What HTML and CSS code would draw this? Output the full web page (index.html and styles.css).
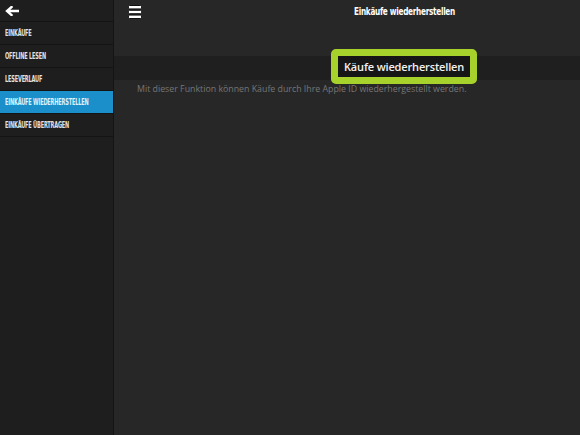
FILE: index.html
```html
<!DOCTYPE html>
<html lang="de">

<head>
  <meta charset="UTF-8">
  <meta name="viewport" content="width=device-width, initial-scale=1.0">

  <title>Einkäufe wiederherstellen</title>
  <link rel="stylesheet" href="styles.css">
</head>

<body>
  <aside class="sidebar">
    <div class="back-row">
      <svg class="back-icon" width="14" height="10" viewBox="0 0 14 10">
        <path d="M13 5H3M6.5 1L2 5l4.5 4" fill="none" stroke="#fff" stroke-width="2.4" stroke-linecap="square"/>
      </svg>
    </div>
    <ul class="menu">
      <li class="menu-item"><span class="narrow">Einkäufe</span></li>
      <li class="menu-item"><span class="narrow">Offline lesen</span></li>
      <li class="menu-item"><span class="narrow">Leseverlauf</span></li>
      <li class="menu-item active"><span class="narrow">Einkäufe wiederherstellen</span></li>
      <li class="menu-item"><span class="narrow">Einkäufe übertragen</span></li>
    </ul>
  </aside>

  <main class="content">
    <header class="topbar">
      <svg class="menu-icon" width="14" height="14" viewBox="0 0 14 14">
        <rect x="0.5" y="0.5" width="13" height="3.4" rx="1" fill="#fff" stroke="#111"/>
        <rect x="0.5" y="5.3" width="13" height="3.4" rx="1" fill="#fff" stroke="#111"/>
        <rect x="0.5" y="10.1" width="13" height="3.4" rx="1" fill="#fff" stroke="#111"/>
      </svg>
      <h1 class="title"><span class="narrow">Einkäufe wiederherstellen</span></h1>
    </header>

    <div class="toolbar">
      <button type="button" class="restore-button">Käufe wiederherstellen</button>
    </div>

    <p class="hint">Mit dieser Funktion können Käufe durch Ihre Apple ID wiederhergestellt werden.</p>
  </main>
</body>
</html>
```

FILE: styles.css
```css
/* Settings screen: side menu + restore purchases panel */

html,
body {
  height: 100%;
}

body {
  margin: 0;
  display: flex;
  background-color: #272727;
  font-family: "Open Sans", "Noto Sans", sans-serif;
}

/* squeezed headline type */
.narrow {
  display: inline-block;
  transform-origin: left center;
  white-space: nowrap;
}

.sidebar {
  width: 113px;
  flex-shrink: 0;
  background-color: #1e1e1e;
  border-right: 1px solid #141414;
}

.back-row {
  height: 21px;
  display: flex;
  align-items: center;
  padding-left: 5px;
  border-bottom: 1px solid #141414;
}

.back-icon {
  display: block;
}

.menu {
  list-style: none;
  margin: 0;
  padding: 0;
}

.menu-item {
  height: 22px;
  display: flex;
  align-items: center;
  padding-left: 5px;
  border-bottom: 1px solid #141414;
  color: #e2e2e2;
  font-family: "DejaVu Sans Condensed", "DejaVu Sans", sans-serif;
  font-size: 9px;
  font-weight: bold;
  letter-spacing: -0.3px;
  text-transform: uppercase;
  overflow: hidden;
}

.menu-item .narrow {
  transform: scaleX(0.62);
}

.menu-item.active {
  background-color: #1b8fca;
  color: #dff1fb;
}

.content {
  flex: 1;
  display: flex;
  flex-direction: column;
}

.topbar {
  height: 56px;
  display: flex;
  align-items: flex-start;
  padding: 5px 0 0 14px;
  box-sizing: border-box;
}

.menu-icon {
  display: block;
}

.title {
  margin: 0 0 0 212px;
  color: #fff;
  font-family: "DejaVu Sans Condensed", "DejaVu Sans", sans-serif;
  font-size: 11px;
  font-weight: bold;
  letter-spacing: -0.4px;
}

.title .narrow {
  transform: scaleX(0.74);
}

.toolbar {
  height: 24px;
  display: flex;
  align-items: center;
  padding-left: 217px;
  background-color: #1f1f1f;
}

.restore-button {
  margin-top: -4px;
  padding: 5px 6px;
  background-color: #161616;
  color: #f2f2f2;
  border: 7px solid #a6d22b;
  border-radius: 5px;
  font-family: "Open Sans", "Noto Sans", sans-serif;
  font-size: 11px;
  font-weight: 600;
  letter-spacing: -0.15px;
  line-height: 11px;
  cursor: pointer;
}

.hint {
  margin: 3px 0 0 23px;
  color: #767676;
  font-family: "Open Sans", "Noto Sans", sans-serif;
  font-size: 8.8px;
}
```
